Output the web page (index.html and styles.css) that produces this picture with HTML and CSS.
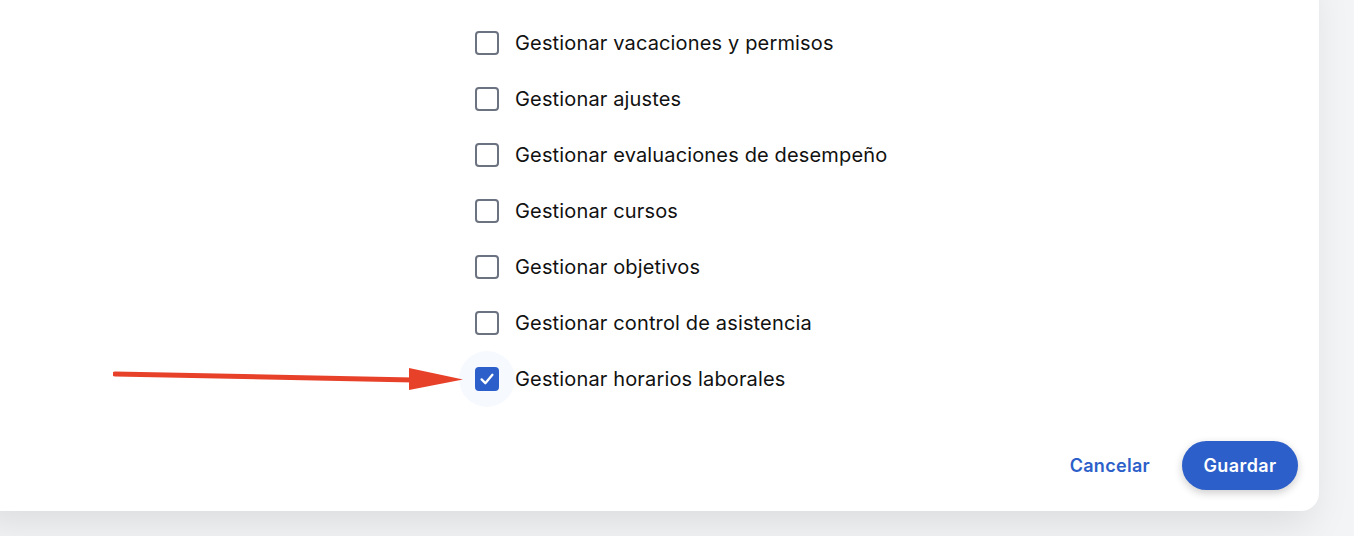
FILE: index.html
```html
<!DOCTYPE html>
<html lang="es">
<head>
<meta charset="utf-8">
<link rel="stylesheet" href="styles.css">
</head>
<body>
<div class="page">
  <div class="card">
    <ul class="perm-list">
      <li class="perm"><span class="box checked"><svg viewBox="0 0 24 24"><path d="M5.5 12.5l4.5 4.5 8.5-10"/></svg></span><span class="label">Gestionar empleados</span></li>
      <li class="perm"><span class="box"></span><span class="label">Gestionar vacaciones y permisos</span></li>
      <li class="perm"><span class="box"></span><span class="label">Gestionar ajustes</span></li>
      <li class="perm"><span class="box"></span><span class="label">Gestionar evaluaciones de desempeño</span></li>
      <li class="perm"><span class="box"></span><span class="label">Gestionar cursos</span></li>
      <li class="perm"><span class="box"></span><span class="label">Gestionar objetivos</span></li>
      <li class="perm"><span class="box"></span><span class="label">Gestionar control de asistencia</span></li>
      <li class="perm"><span class="box checked focused"><svg viewBox="0 0 24 24"><path d="M5.5 12.5l4.5 4.5 8.5-10"/></svg></span><span class="label">Gestionar horarios laborales</span></li>
    </ul>
    <div class="actions">
      <button class="btn-text">Cancelar</button>
      <button class="btn-primary">Guardar</button>
    </div>
  </div>
  <svg class="arrow" width="360" height="30" viewBox="0 0 360 30">
    <path d="M2 10 L300 16" stroke="#e8412a" stroke-width="5" stroke-linecap="round" fill="none"/>
    <path d="M296 4 L350 15.5 L296 26 Z" fill="#e8412a"/>
  </svg>
</div>
</body>
</html>
```

FILE: styles.css
```css
html, body {
  margin: 0;
  padding: 0;
  height: 100%;
  overflow: hidden;
}
body {
  background: #f3f4f6;
  font-family: Inter, "Noto Sans", "Liberation Sans", sans-serif;
  color: #111111;
}
.page {
  position: relative;
  height: 536px;
  overflow: hidden;
}
.card {
  background: #ffffff;
  margin: -41px 35px 0 -30px;
  border-radius: 0 0 18px 18px;
  padding: 0 21px 21px 505px;
  box-shadow: 0 20px 40px -8px rgba(0, 0, 0, 0.1);
}
.perm-list {
  list-style: none;
  margin: 0;
  padding: 0;
  position: relative;
  z-index: 0;
}
.perm {
  height: 56px;
  display: flex;
  align-items: center;
  gap: 16px;
}
.box {
  position: relative;
  box-sizing: border-box;
  width: 24px;
  height: 24px;
  border: 2px solid #6b7280;
  border-radius: 4px;
  background: #fff;
  flex: none;
  display: flex;
  align-items: center;
  justify-content: center;
}
.box.checked {
  background: #2c5fc9;
  border-color: #2c5fc9;
}
.box svg {
  width: 22px;
  height: 22px;
}
.box svg path {
  fill: none;
  stroke: #fff;
  stroke-width: 2.8;
  stroke-linecap: round;
  stroke-linejoin: round;
}
.box.focused::before {
  content: "";
  position: absolute;
  left: 50%;
  top: 50%;
  width: 56px;
  height: 56px;
  margin: -28px 0 0 -28px;
  border-radius: 50%;
  background: #f6f9fe;
  z-index: -1;
}
.label {
  font-size: 20px;
  line-height: 24px;
  letter-spacing: 0.15px;
}
.actions {
  margin-top: 34px;
  display: flex;
  justify-content: flex-end;
  align-items: center;
  gap: 32px;
}
.btn-text {
  border: none;
  background: none;
  padding: 0;
  font-family: inherit;
  font-size: 18px;
  font-weight: 600;
  letter-spacing: 0.3px;
  color: #2c5fc9;
}
.btn-primary {
  border: none;
  width: 116px;
  height: 49px;
  border-radius: 25px;
  background: #2c5fc9;
  color: #fff;
  font-family: inherit;
  font-size: 18px;
  font-weight: 600;
  letter-spacing: 0.4px;
  box-shadow: 0 3px 8px rgba(0, 0, 0, 0.2);
}
.arrow {
  position: absolute;
  left: 113px;
  top: 364px;
}
```
